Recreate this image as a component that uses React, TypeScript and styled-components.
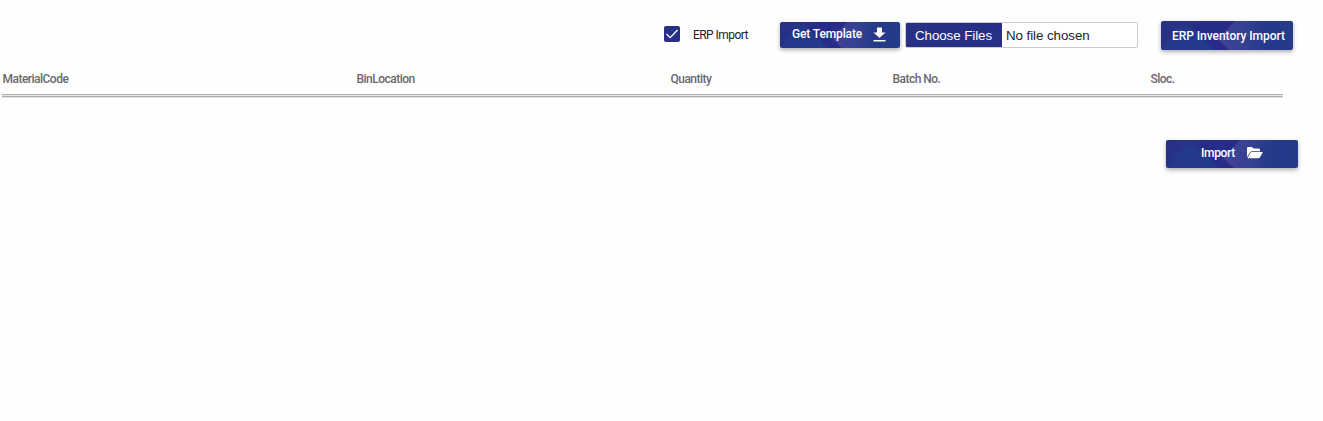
import React from "react";
import styled, { createGlobalStyle } from "styled-components";

const GlobalStyle = createGlobalStyle`
  * { box-sizing: border-box; }
  body { margin: 0; background: #fefefe; font-family: Roboto, "Liberation Sans", sans-serif; }
`;

const Page = styled.main`
  width: 1323px;
  height: 421px;
  overflow: hidden;
  background: #fefefe;
`;

const Toolbar = styled.header`
  display: flex;
  align-items: flex-start;
  height: 70px;
  padding: 21px 0 0 664px;
`;

const CheckLabel = styled.label`
  display: flex;
  align-items: center;
  width: 116px;
  height: 27px;
  gap: 13px;
  font-size: 12px;
  letter-spacing: -0.55px;
  color: #222;
  white-space: nowrap;
`;

const CheckBox = styled.span`
  display: flex;
  flex: none;
  width: 16px;
  height: 16px;
  margin-top: -2px;
  border-radius: 2px;
  background: #283085;
`;

const Button = styled.button<{ $width: number; $height: number; $pad: number; $gap?: number; $spacing?: number }>`
  position: relative;
  display: flex;
  flex: none;
  align-items: center;
  width: ${(p) => p.$width}px;
  height: ${(p) => p.$height}px;
  padding: 0 0 0 ${(p) => p.$pad}px;
  gap: ${(p) => p.$gap ?? 0}px;
  border: 0;
  border-radius: 2px;
  overflow: hidden;
  background: linear-gradient(90deg, #283085, #243b8a);
  color: #fff;
  font: 500 12px Roboto, sans-serif;
  letter-spacing: ${(p) => p.$spacing ?? 0}px;
  white-space: nowrap;
`;

const Lift = styled.div<{ $top?: number; $left?: number }>`
  flex: none;
  margin: ${(p) => p.$top ?? 0}px 0 0 ${(p) => p.$left ?? 0}px;
  border-radius: 2px;
  box-shadow: 0 2px 4px rgba(0, 0, 0, 0.32);
`;

const Backdrop = styled.svg`
  position: absolute;
  inset: 0;
  width: 100%;
  height: 100%;
`;

const Caption = styled.span<{ $raise?: number }>`
  position: relative;
  line-height: 14px;
  margin-bottom: ${(p) => p.$raise ?? 0}px;
`;

const Glyph = styled.svg<{ $raise?: number }>`
  position: relative;
  flex: none;
  margin-bottom: ${(p) => p.$raise ?? 0}px;
`;

const FileField = styled.div`
  display: flex;
  flex: none;
  width: 233px;
  height: 26px;
  margin: 1px 0 0 5px;
  border: 1px solid #ccc;
  border-radius: 2px;
  overflow: hidden;
  background: #fff;
  font: 13.33px/26px "Liberation Sans", sans-serif;
  letter-spacing: -0.06px;
  color: #222;
`;

const FileButton = styled.span`
  width: 96px;
  padding-left: 9px;
  background: #283085;
  color: #fff;
`;

const FileName = styled.span`
  padding-left: 4px;
`;

const Table = styled.table`
  width: 1281px;
  margin-left: 2px;
  border-collapse: separate;
  border-spacing: 0;
  table-layout: fixed;
`;

const Head = styled.th<{ $width: number }>`
  width: ${(p) => p.$width}px;
  height: 28px;
  padding: 0 0 10px 0.5px;
  border-bottom: 1px solid #b0b2b1;
  text-align: left;
  font-size: 12px;
  line-height: 14px;
  font-weight: 500;
  letter-spacing: -0.52px;
  color: #6a6a6a;
`;

const Rule = styled.div`
  width: 1281px;
  height: 4px;
  margin: -4px 0 0 2px;
  border-top: 1px solid #b0b2b1;
  background: linear-gradient(#e4e6e5 1px, #acaead 1px 2px, #e6e6e6 2px);
`;

const Footer = styled.footer`
  display: flex;
  padding: 42px 0 0 1165.5px;
`;

const Facets = ({ id }: { id: string }) => (
  <Backdrop viewBox="0 0 132 29" preserveAspectRatio="none" aria-hidden="true">
    <defs>
      <linearGradient id={id} x1="0" x2="1">
        <stop offset="0" stopColor="#50489b" stopOpacity=".7" />
        <stop offset=".35" stopColor="#424799" stopOpacity=".6" />
        <stop offset=".75" stopColor="#254089" stopOpacity="0" />
      </linearGradient>
    </defs>
    <path d="M0 29L14 10Q24 1 34 9L54 29Z" fill="#204494" opacity=".4" />
    <path d="M38 0H74L57 18L68 29H53L31 7Z" fill="#28278a" opacity=".6" />
    <path d="M57 18L74 0H132V29H68Z" fill={`url(#${id})`} />
  </Backdrop>
);

const columns = [
  { title: "MaterialCode", width: 354 },
  { title: "BinLocation", width: 314 },
  { title: "Quantity", width: 222 },
  { title: "Batch No.", width: 258 },
  { title: "Sloc.", width: 133 },
];

export default function App() {
  return (
    <>
      <GlobalStyle />
      <Page>
        <Toolbar>
          <CheckLabel>
            <CheckBox role="checkbox" aria-checked="true">
              <svg width="16" height="16" viewBox="0 0 16 16" fill="none">
                <path d="M2.5 8L6.2 11.6L13.5 4" stroke="#fff" strokeWidth="1.3" />
              </svg>
            </CheckBox>
            ERP Import
          </CheckLabel>
          <Lift $top={1}>
            <Button $width={120} $height={26} $pad={12} $gap={11} $spacing={-0.13}>
              <Facets id="template-facet" />
              <Caption $raise={2}>Get Template</Caption>
              <Glyph $raise={1} width="13" height="15" viewBox="0 0 13 15" fill="#fff">
                <path d="M4 0.5H9V5.5H12.5L6.5 11L0.5 5.5H4ZM0.5 13H12.5V14.5H0.5Z" />
              </Glyph>
            </Button>
          </Lift>
          <FileField>
            <FileButton>Choose Files</FileButton>
            <FileName>No file chosen</FileName>
          </FileField>
          <Lift $left={23}>
            <Button $width={132} $height={29} $pad={11} $spacing={-0.05}>
              <Facets id="erp-facet" />
              <Caption>ERP Inventory Import</Caption>
            </Button>
          </Lift>
        </Toolbar>
        <Table>
          <thead>
            <tr>
              {columns.map((c) => (
                <Head key={c.title} $width={c.width}>{c.title}</Head>
              ))}
            </tr>
          </thead>
        </Table>
        <Rule />
        <Footer>
          <Lift>
            <Button $width={132} $height={28} $pad={35.5} $gap={12} $spacing={-0.35}>
              <Facets id="import-facet" />
              <Caption $raise={2}>Import</Caption>
              <Glyph $raise={3} width="16" height="12" viewBox="0 0 16 12" fill="#fff">
                <path d="M0 1.2Q0 0 1.2 0H5L6.5 1.6H11.6Q13 1.6 13 3V4.2H4.8Q3.7 4.2 3.1 5.2L0 10Z" />
                <path d="M4.8 5H15Q16 5 15.5 5.9L12.8 10.4Q12.3 11.2 11.4 11.2H1Q.3 11.2.7 10.5L3.7 5.6Q4 5 4.8 5Z" />
              </Glyph>
            </Button>
          </Lift>
        </Footer>
      </Page>
    </>
  );
}
